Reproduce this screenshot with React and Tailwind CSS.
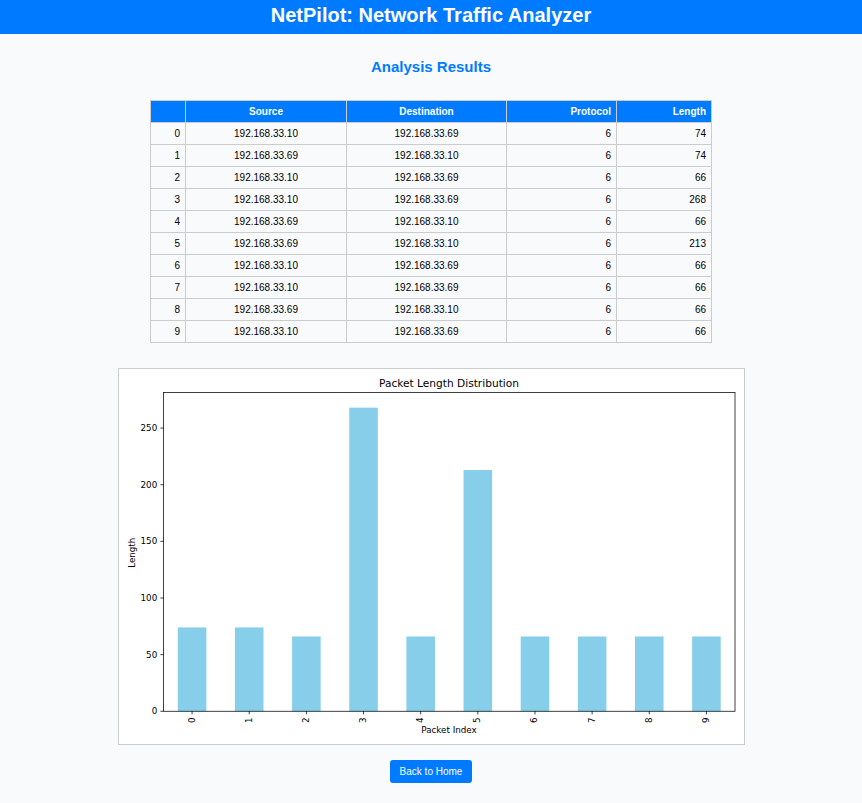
const packets = [
  { source: '192.168.33.10', destination: '192.168.33.69', protocol: 6, length: 74 },
  { source: '192.168.33.69', destination: '192.168.33.10', protocol: 6, length: 74 },
  { source: '192.168.33.10', destination: '192.168.33.69', protocol: 6, length: 66 },
  { source: '192.168.33.10', destination: '192.168.33.69', protocol: 6, length: 268 },
  { source: '192.168.33.69', destination: '192.168.33.10', protocol: 6, length: 66 },
  { source: '192.168.33.69', destination: '192.168.33.10', protocol: 6, length: 213 },
  { source: '192.168.33.10', destination: '192.168.33.69', protocol: 6, length: 66 },
  { source: '192.168.33.10', destination: '192.168.33.69', protocol: 6, length: 66 },
  { source: '192.168.33.69', destination: '192.168.33.10', protocol: 6, length: 66 },
  { source: '192.168.33.10', destination: '192.168.33.69', protocol: 6, length: 66 },
];

const cell = 'border border-[#cccccc] px-[5px] py-[3px]';

function PacketTable() {
  return (
    <table className="w-full max-w-[562px] table-fixed border-collapse text-[10px] leading-[15px] text-black">
      <colgroup>
        <col className="w-[35px]" />
        <col className="w-[161px]" />
        <col className="w-[160px]" />
        <col className="w-[110px]" />
        <col className="w-[95px]" />
      </colgroup>
      <thead className="bg-[#007bff] font-bold text-white">
        <tr>
          <th className={cell} />
          <th scope="col" className={cell}>Source</th>
          <th scope="col" className={cell}>Destination</th>
          <th scope="col" className={`${cell} text-right`}>Protocol</th>
          <th scope="col" className={`${cell} text-right`}>Length</th>
        </tr>
      </thead>
      <tbody>
        {packets.map((p, i) => (
          <tr key={i}>
            <td className={`${cell} text-right`}>{i}</td>
            <td className={`${cell} text-center`}>{p.source}</td>
            <td className={`${cell} text-center`}>{p.destination}</td>
            <td className={`${cell} text-right`}>{p.protocol}</td>
            <td className={`${cell} text-right`}>{p.length}</td>
          </tr>
        ))}
      </tbody>
    </table>
  );
}

// Plot area, in the chart's own 1000 x 600 units.
const plot = { left: 71.2, right: 985.6, top: 37.6, bottom: 547.6 };
const maxValue = 281.4;
const step = (plot.right - plot.left) / packets.length;
const yOf = (v) => plot.bottom - (v / maxValue) * (plot.bottom - plot.top);
const xOf = (i) => plot.left + step * (i + 0.5);

function LengthChart() {
  return (
    <svg
      viewBox="0 0 1000 600"
      role="img"
      aria-label="Packet Length Distribution"
      className="block w-full bg-white font-['DejaVu_Sans',sans-serif] text-[14px]"
    >
      {packets.map((p, i) => (
        <rect
          key={i}
          x={xOf(i) - step / 4}
          y={yOf(p.length)}
          width={step / 2}
          height={plot.bottom - yOf(p.length)}
          fill="#87ceeb"
        />
      ))}
      <g stroke="#000" strokeWidth="1.2" fill="none">
        <rect x={plot.left} y={plot.top} width={plot.right - plot.left} height={plot.bottom - plot.top} />
        {[0, 50, 100, 150, 200, 250].map((v) => (
          <line key={v} x1={plot.left - 5} x2={plot.left} y1={yOf(v)} y2={yOf(v)} />
        ))}
        {packets.map((_, i) => (
          <line key={i} x1={xOf(i)} x2={xOf(i)} y1={plot.bottom} y2={plot.bottom + 5} />
        ))}
      </g>
      <g textAnchor="end">
        {[0, 50, 100, 150, 200, 250].map((v) => (
          <text key={v} x={plot.left - 10} y={yOf(v) + 5}>{v}</text>
        ))}
      </g>
      <g textAnchor="middle">
        {packets.map((_, i) => (
          <text key={i} transform={`translate(${xOf(i) + 4} 562) rotate(-90)`}>{i}</text>
        ))}
        <text x="528" y="582">Packet Index</text>
        <text transform="translate(26 294) rotate(-90)">Length</text>
        <text x="528" y="29" className="text-[17px]">Packet Length Distribution</text>
      </g>
    </svg>
  );
}

export default function App() {
  return (
    <div className="min-h-screen bg-[#f8fafc] font-['Liberation_Sans',Arial,sans-serif]">
      <header className="bg-[#007bff] px-4 pt-1 pb-2 text-center text-white">
        <h1 className="text-[20px] leading-[22px] font-bold">NetPilot: Network Traffic Analyzer</h1>
      </header>
      <main className="flex flex-col items-center px-4 pt-6 pb-5">
        <h2 className="mb-6 text-[15px] leading-[18px] font-bold text-[#007bff]">Analysis Results</h2>
        <PacketTable />
        <div className="mt-[25px] w-full max-w-[627px] border border-[#cccccc]">
          <LengthChart />
        </div>
        <a
          href="#home"
          className="mt-[15px] rounded-[3px] bg-[#007bff] px-[10px] py-1 text-[10px] leading-[15px] text-white"
        >
          Back to Home
        </a>
      </main>
    </div>
  );
}
